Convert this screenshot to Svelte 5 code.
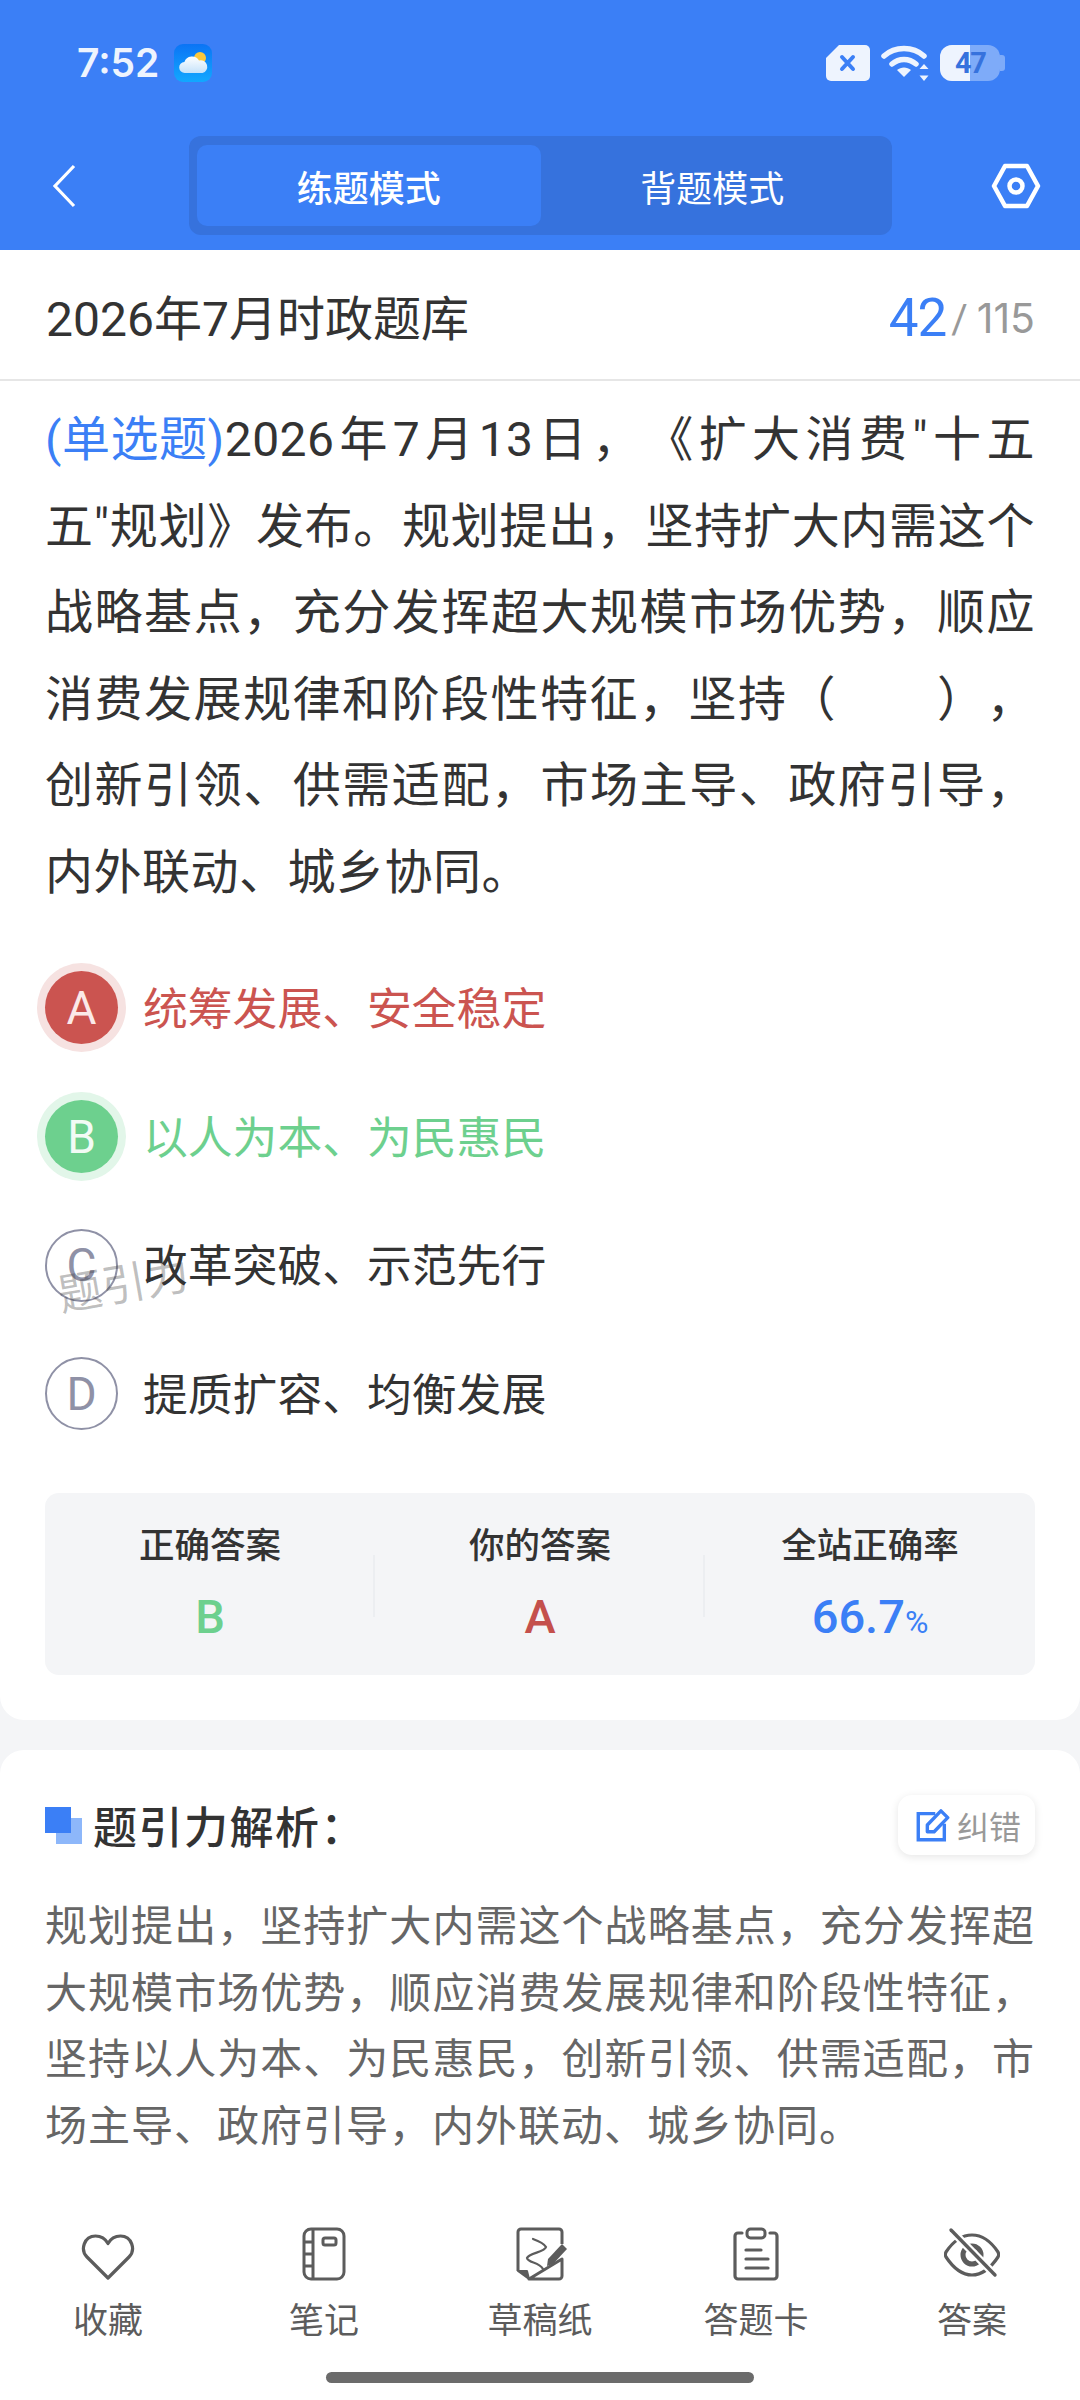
<script>
    const options = [
        { key: 'A', text: '统筹发展、安全稳定', state: 'wrong' },
        { key: 'B', text: '以人为本、为民惠民', state: 'right' },
        { key: 'C', text: '改革突破、示范先行', state: '' },
        { key: 'D', text: '提质扩容、均衡发展', state: '' }
    ]
</script>

<div class="page">
    <header class="head">
        <div class="status">
            <div class="status-left">
                <span class="time">7:52</span>
                <svg class="weather" viewBox="0 0 38 38" aria-hidden="true">
                    <defs>
                        <linearGradient id="wbg" x1="0" y1="0" x2="0" y2="1">
                            <stop offset="0" stop-color="#0b74f5" />
                            <stop offset="1" stop-color="#12a8ff" />
                        </linearGradient>
                        <linearGradient id="wcl" x1="0" y1="0" x2="0" y2="1">
                            <stop offset="0" stop-color="#ffffff" />
                            <stop offset="1" stop-color="#c5e2fa" />
                        </linearGradient>
                    </defs>
                    <rect width="38" height="38" rx="9" fill="url(#wbg)" />
                    <circle cx="26" cy="14" r="6" fill="#fdc83a" />
                    <path d="M11 29a5.500 5.500 0 0 1-.6-11A8 8 0 0 1 25 16.500a6.300 6.300 0 0 1 3.500 12.500Z" fill="url(#wcl)" />
                </svg>
            </div>
            <div class="status-right">
                <svg class="sim" viewBox="0 0 44 36" aria-hidden="true">
                    <path d="M13 0H39a5 5 0 0 1 5 5V31a5 5 0 0 1-5 5H5a5 5 0 0 1-5-5V13Z" fill="#eef4fe" />
                    <path d="M16 12l11 12M27 12L16 24" stroke="#3b7ff6" stroke-width="4" stroke-linecap="round" />
                </svg>
                <svg class="wifi" viewBox="0 0 48 36" aria-hidden="true">
                    <path d="M3 11C14 1 32 1 43 11" fill="none" stroke="#eef4fe" stroke-width="5.500" stroke-linecap="round" />
                    <path d="M11 19c7-6 17-6 24 0" fill="none" stroke="#eef4fe" stroke-width="5.500" stroke-linecap="round" />
                    <path d="M16 25c4-3.500 10-3.500 14 0l-7 7Z" fill="#eef4fe" />
                    <path d="M43 19l4.500 5h-9ZM43 36l-4.500-5.500h9Z" fill="#eef4fe" />
                </svg>
                <div class="battery">
                    <span class="bat-fill"></span>
                    <span class="bat-cap"></span>
                    <span class="bat-num">47</span>
                </div>
            </div>
        </div>
        <nav class="nav">
            <svg class="back" viewBox="0 0 24 44" aria-hidden="true">
                <path d="M22 2L3 22l19 20" fill="none" stroke="#fff" stroke-width="3.200" />
            </svg>
            <div class="seg">
                <div class="seg-item active">练题模式</div>
                <div class="seg-item">背题模式</div>
            </div>
            <svg class="hex" viewBox="0 0 50 46" aria-hidden="true">
                <path d="M14 3H36L47 23 36 43H14L3 23Z" fill="none" stroke="#fff" stroke-width="4.500" stroke-linejoin="round" />
                <circle cx="25" cy="23" r="6.500" fill="none" stroke="#fff" stroke-width="4.500" />
            </svg>
        </nav>
    </header>

    <main class="main">
        <section class="card first">
            <div class="title-row">
                <h1 class="title">2026年7月时政题库</h1>
                <div class="count"><b>42</b><i>/</i><span>115</span></div>
            </div>
            <p class="question"><span class="qtype">(单选题)</span>2026年7月13日，《扩大消费"十五<span class="keep">五"规</span>划》发布。规划提出，坚持扩大内需这个战略基点，充分发挥超大规模市场优势，顺应消费发展规律和阶段性特征，坚持（&emsp;&emsp;），创新引领、供需适配，市场主导、政府引导，内外联动、城乡协同。</p>

            <div class="options">
                {#each options as o}
                    <div class="opt {o.state}">
                        <span class="opt-key">{o.key}</span>
                        <span class="opt-text">{o.text}</span>
                    </div>
                {/each}
                <span class="mark">题引力</span>
            </div>

            <div class="result">
                <div class="res-col">
                    <span class="res-label">正确答案</span>
                    <span class="res-val green">B</span>
                </div>
                <div class="res-col">
                    <span class="res-label">你的答案</span>
                    <span class="res-val red">A</span>
                </div>
                <div class="res-col">
                    <span class="res-label">全站正确率</span>
                    <span class="res-val blue">66.7<small>%</small></span>
                </div>
            </div>
        </section>

        <section class="card second">
            <div class="ana-head">
                <span class="squares"><i></i><b></b></span>
                <h2 class="ana-title">题引力解析：</h2>
                <div class="fix">
                    <svg viewBox="0 0 30 30" aria-hidden="true">
                        <path d="M17 5H2V28H25V14" fill="none" stroke="#3b7ff6" stroke-width="3" />
                        <path d="M10 21V15L22 2.500 28 8.500 16 21Z" fill="none" stroke="#3b7ff6" stroke-width="3" stroke-linejoin="round" />
                    </svg>
                    <span>纠错</span>
                </div>
            </div>
            <p class="ana-text">规划提出，坚持扩大内需这个战略基点，充分发挥超大规模市场优势，顺应消费发展规律和阶段性特征，坚持以人为本、为民惠民，创新引领、供需适配，市场主导、政府引导，内外联动、城乡协同。</p>
        </section>
    </main>

    <footer class="foot">
        <div class="tabs">
            <div class="tab">
                <svg viewBox="0 0 56 56" aria-hidden="true">
                    <path d="M28 51L7 30C0 23 4 9 15.500 9 21 9 25.500 12 28 16.500 30.500 12 35 9 40.500 9 52 9 56 23 49 30Z" fill="none" stroke="#5c5c5c" stroke-width="3.200" stroke-linejoin="round" />
                </svg>
                <span>收藏</span>
            </div>
            <div class="tab">
                <svg viewBox="0 0 56 56" aria-hidden="true">
                    <rect x="8" y="2" width="40" height="50" rx="7" fill="none" stroke="#5c5c5c" stroke-width="3" />
                    <path d="M17 2V52M8 15H17M8 27H17M8 39H17" fill="none" stroke="#5c5c5c" stroke-width="3" />
                    <rect x="27" y="11" width="13" height="7" rx="2" fill="none" stroke="#5c5c5c" stroke-width="3" />
                </svg>
                <span>笔记</span>
            </div>
            <div class="tab">
                <svg viewBox="0 0 56 56" aria-hidden="true">
                    <path d="M6 44V5a3 3 0 0 1 3-3H47a3 3 0 0 1 3 3V17M50 32V49a3 3 0 0 1-3 3H17Z" fill="none" stroke="#5c5c5c" stroke-width="3" stroke-linejoin="round" />
                    <path d="M6 44L17 52 15 44Z" fill="#5c5c5c" stroke="#5c5c5c" stroke-width="2" stroke-linejoin="round" />
                    <path d="M21 12C29 15 33 18 34 20 33 25 17 26 15 31 16 36 27 35 31 42" fill="none" stroke="#5c5c5c" stroke-width="2.200" stroke-linecap="round" />
                    <path d="M50 17L55 22 41 37 35 39 36 32Z" fill="#5c5c5c" />
                </svg>
                <span>草稿纸</span>
            </div>
            <div class="tab">
                <svg viewBox="0 0 56 56" aria-hidden="true">
                    <path d="M14 6H10a3 3 0 0 0-3 3V49a3 3 0 0 0 3 3H46a3 3 0 0 0 3-3V9a3 3 0 0 0-3-3H42" fill="none" stroke="#5c5c5c" stroke-width="3.200" stroke-linecap="round" />
                    <rect x="19" y="2" width="18" height="9" rx="3.500" fill="none" stroke="#5c5c5c" stroke-width="3" />
                    <path d="M18 23H33M18 32H40M18 41H40" stroke="#5c5c5c" stroke-width="3.200" stroke-linecap="round" />
                </svg>
                <span>答题卡</span>
            </div>
            <div class="tab">
                <svg viewBox="0 0 56 56" aria-hidden="true">
                    <path d="M2 25C10 13 18 8 28 8 38 8 46 13 54 25 55 27 55 28 54 30 46 42 38 48 28 48 18 48 10 42 2 30 1 28 1 27 2 25Z" fill="none" stroke="#5c5c5c" stroke-width="3.200" />
                    <circle cx="28" cy="28" r="9" fill="none" stroke="#5c5c5c" stroke-width="5" />
                    <path d="M7 3L51 48" stroke="#fff" stroke-width="8" />
                    <path d="M7 3L51 48" stroke="#5c5c5c" stroke-width="3.400" stroke-linecap="round" />
                </svg>
                <span>答案</span>
            </div>
        </div>
        <div class="home"></div>
    </footer>
</div>

<style>
    :global(body) {
        margin: 0;
        background: #f4f5f7;
    }

    .page {
        width: 1080px;
        height: 2400px;
        display: flex;
        flex-direction: column;
        overflow: hidden;
        font-family: Roboto, "Noto Sans CJK SC", sans-serif;
        color: #333;
        text-spacing-trim: space-all;
    }

    .head {
        height: 250px;
        flex: none;
        background: #3b7ff6;
    }

    .status {
        display: flex;
        justify-content: space-between;
        align-items: center;
        height: 38px;
        padding: 44px 80px 0 77px;
    }

    .status-left,
    .status-right {
        display: flex;
        align-items: center;
    }

    .time {
        font-family: Inter, sans-serif;
        font-size: 39px;
        font-weight: 600;
        color: #eef4fe;
        line-height: 38px;
    }

    .weather {
        width: 38px;
        height: 38px;
        margin-left: 15px;
    }

    .sim {
        width: 44px;
        height: 36px;
    }

    .wifi {
        width: 48px;
        height: 36px;
        margin-left: 11px;
    }

    .battery {
        position: relative;
        width: 60px;
        height: 36px;
        margin-left: 11px;
        background: #eef4fe60;
        border-radius: 12px;
    }

    .bat-fill {
        position: absolute;
        left: 0;
        top: 0;
        bottom: 0;
        width: 30px;
        background: #eef4fe;
        border-radius: 12px 0 0 12px;
    }

    .bat-cap {
        position: absolute;
        right: -5px;
        top: 10px;
        width: 5px;
        height: 16px;
        background: #eef4fe60;
        border-radius: 0 3px 3px 0;
    }

    .bat-num {
        position: absolute;
        left: 15px;
        top: 0;
        font-size: 29px;
        line-height: 36px;
        font-weight: 700;
        letter-spacing: -1.500px;
        color: #3672dd;
    }

    .nav {
        display: flex;
        align-items: center;
        padding: 0 39px 0 52px;
        margin-top: 54px;
    }

    .back {
        width: 24px;
        height: 44px;
    }

    .seg {
        display: flex;
        width: 703px;
        height: 99px;
        margin-left: 113px;
        padding: 9px 8px;
        box-sizing: border-box;
        background: #3672dd;
        border-radius: 12px;
    }

    .seg-item {
        flex: 1;
        display: flex;
        align-items: center;
        justify-content: center;
        font-size: 36px;
        color: #fff;
        border-radius: 10px;
    }

    .seg-item.active {
        background: #3b7ff6;
        font-weight: 500;
    }

    .hex {
        width: 50px;
        height: 46px;
        margin-left: auto;
    }

    .main {
        flex: 1;
        min-height: 0;
        display: flex;
        flex-direction: column;
        gap: 30px;
    }

    .card {
        background: #fff;
    }

    .first {
        height: 1470px;
        flex: none;
        border-radius: 0 0 24px 24px;
        box-sizing: border-box;
        padding: 0 45px;
    }

    .second {
        flex: 1;
        border-radius: 24px 24px 0 0;
        padding: 45px 45px 0;
    }

    .title-row {
        display: flex;
        justify-content: space-between;
        align-items: center;
        height: 129px;
        margin: 0 -45px;
        padding: 0 45px 0 46px;
        border-bottom: 2px solid #e6e6e6;
    }

    .title {
        margin: 0;
        font-size: 48px;
        font-weight: 400;
        color: #333;
    }

    .count {
        display: flex;
        align-items: baseline;
        color: #999;
    }

    .count b {
        position: relative;
        top: 3px;
        font-size: 53px;
        font-weight: 400;
        letter-spacing: -1px;
        color: #3b7ff6;
    }

    .count i {
        font-style: normal;
        font-size: 40px;
        margin: 0 9px 0 5px;
    }

    .count span {
        font-family: Inter, sans-serif;
        font-size: 41px;
    }

    .question {
        margin: 16px 0 0;
        font-size: 48px;
        line-height: 86.600px;
        text-align: justify;
        letter-spacing: 0.500px;
        color: #333;
    }

    .qtype {
        display: inline-block;
        color: #3b7ff6;
    }

    .keep {
        white-space: nowrap;
    }

    .options {
        position: relative;
        display: flex;
        flex-direction: column;
        margin-top: 27px;
    }

    .opt {
        display: flex;
        align-items: center;
        height: 128.700px;
        font-size: 44.800px;
        color: #333;
    }

    .opt-key {
        flex: none;
        width: 73px;
        height: 73px;
        box-sizing: border-box;
        display: flex;
        align-items: center;
        justify-content: center;
        border: 2px solid #8f91a6;
        border-radius: 50%;
        font-size: 46px;
        color: #8f91a6;
    }

    .opt-text {
        margin: 0 0 5px 25px;
    }

    .opt.wrong {
        color: #cb5450;
    }

    .opt.wrong .opt-key {
        background: #cb5450;
        border: 0;
        color: #fbe9e8;
        box-shadow: 0 0 0 8px #f6e2e1;
    }

    .opt.right {
        color: #6dd08e;
    }

    .opt.right .opt-key {
        background: #6dd08e;
        border: 0;
        color: #f2fbf5;
        box-shadow: 0 0 0 8px #e2f6e9;
    }

    .mark {
        position: absolute;
        left: 12px;
        top: 305px;
        font-size: 44px;
        color: #33333350;
        transform: rotate(-10deg);
    }

    .result {
        display: flex;
        margin-top: 35px;
        height: 182px;
        background: #f4f5f7;
        border-radius: 14px;
    }

    .res-col {
        flex: 1;
        display: flex;
        flex-direction: column;
        align-items: center;
        padding-top: 29px;
        position: relative;
    }

    .res-col + .res-col::before {
        content: "";
        position: absolute;
        left: -2px;
        top: 62px;
        height: 62px;
        width: 2px;
        background: #eceef1;
    }

    .res-label {
        font-size: 35.500px;
        font-weight: 500;
        line-height: 48px;
        color: #333;
    }

    .res-val {
        margin-top: 20px;
        font-size: 47px;
        font-weight: 500;
        line-height: 54px;
    }

    .res-val small {
        font-size: 32px;
        font-weight: 400;
    }

    .green {
        color: #6dd08e;
    }

    .red {
        color: #c4504c;
    }

    .blue {
        color: #3b7ff6;
    }

    .ana-head {
        display: flex;
        align-items: center;
        height: 60px;
    }

    .squares {
        position: relative;
        flex: none;
        width: 37px;
        height: 37px;
    }

    .squares b,
    .squares i {
        position: absolute;
        width: 26px;
        height: 26px;
    }

    .squares b {
        left: 0;
        top: 0;
        background: #3b7ff6;
    }

    .squares i {
        right: 0;
        bottom: 0;
        background: #8db7fa;
    }

    .ana-title {
        margin: 0 0 0 11px;
        font-size: 44px;
        font-weight: 500;
        letter-spacing: 1.500px;
        color: #333;
    }

    .fix {
        display: flex;
        align-items: center;
        gap: 7px;
        margin-left: auto;
        height: 60px;
        padding: 0 5px 0 18px;
        width: 137px;
        box-sizing: border-box;
        border-radius: 14px;
        background: #fff;
        font-size: 32px;
        color: #999;
        box-shadow: 0 2px 8px #0000001a;
    }

    .fix svg {
        width: 34px;
        height: 34px;
    }

    .ana-text {
        margin: 39px 0 0;
        font-size: 42px;
        line-height: 66.600px;
        letter-spacing: 1px;
        text-align: justify;
        color: #666;
    }

    .foot {
        flex: none;
        height: 220px;
        background: #fff;
        display: flex;
        flex-direction: column;
        align-items: center;
    }

    .tabs {
        display: flex;
        width: 100%;
        padding-top: 47px;
    }

    .tab {
        flex: none;
        width: 216px;
        display: flex;
        flex-direction: column;
        align-items: center;
        font-size: 35px;
        color: #5c5c5c;
    }

    .tab svg {
        width: 56px;
        height: 56px;
    }

    .tab span {
        margin-top: 15px;
        line-height: 48px;
    }

    .home {
        width: 428px;
        height: 11px;
        margin-top: 26px;
        border-radius: 6px;
        background: #6b6b6b;
    }
</style>
